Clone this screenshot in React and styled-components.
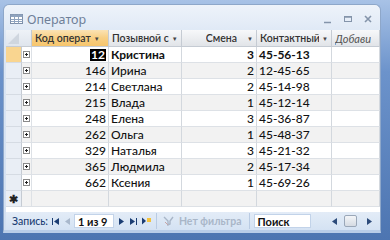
import React from 'react';
import styled, { createGlobalStyle } from 'styled-components';

const GlobalStyle = createGlobalStyle`
  body {
    margin: 0;
    background: #5a82bd;
    font-family: Lato, "Noto Sans", sans-serif;
  }
`;

//***Data***/
const rows = [
  { id: 12, name: 'Кристина', shift: 3, phone: '45-56-13' },
  { id: 146, name: 'Ирина', shift: 2, phone: '12-45-65' },
  { id: 214, name: 'Светлана', shift: 2, phone: '45-14-98' },
  { id: 215, name: 'Влада', shift: 1, phone: '45-12-14' },
  { id: 248, name: 'Елена', shift: 3, phone: '45-36-87' },
  { id: 262, name: 'Ольга', shift: 1, phone: '45-48-37' },
  { id: 329, name: 'Наталья', shift: 3, phone: '45-21-32' },
  { id: 365, name: 'Людмила', shift: 2, phone: '45-17-34' },
  { id: 662, name: 'Ксения', shift: 1, phone: '45-69-26' },
];

const cols = '16px 10px 77px 73px 75px 75px 1fr';

//***Frame***/
const Desktop = styled.div`
  width: 390px;
  height: 240px;
  overflow: hidden;
  box-sizing: border-box;
  padding: 4px 9px 0 3px;
  background: linear-gradient(#a8c2e6 0%, #6c93cb 30%, #4d75b1 100%);
`;

const Window = styled.div`
  height: 229px;
  box-sizing: border-box;
  border: 1px solid #8ea7c9;
  border-bottom: 3px solid #b9cde8;
  border-radius: 6px 6px 0 0;
  background: linear-gradient(#eef3fa, #dbe6f4 15%, #d3e0f1);
  padding-left: 2px;
  display: flex;
  flex-direction: column;
`;

const TitleBar = styled.div`
  height: 25px;
  box-sizing: border-box;
  padding: 3px 4px 0 4px;
  display: flex;
  align-items: center;
`;

const Title = styled.span`
  margin-left: 4px;
  font-family: "Noto Sans", sans-serif;
  font-size: 12.5px;
  color: #6f7f98;
  flex: 1;
`;

const Controls = styled.div`
  display: flex;
  gap: 10px;
  align-items: center;
  margin-right: 3px;
`;

//***Datasheet***/
const Sheet = styled.div`
  background: #fff;
  height: 182px;
  overflow: hidden;
`;

const Row = styled.div`
  display: grid;
  grid-template-columns: ${cols};
  height: ${p => (p.$head ? 17 : 16)}px;
  background: ${p => (p.$alt ? '#f2f2f2' : '#fff')};
`;

const HeadCell = styled.div`
  box-sizing: border-box;
  border-right: 1px solid #c5cbd3;
  border-bottom: 1px solid #c5cbd3;
  background: ${p => (p.$active
    ? 'linear-gradient(#fbe3b4, #f8cf83 50%, #f6c56c)'
    : 'linear-gradient(#f7f8fa, #eceef1 50%, #e1e4e8)')};
  display: flex;
  align-items: center;
  justify-content: ${p => (p.$end ? 'flex-end' : 'flex-start')};
  padding: 0 3px 0 3px;
  font-size: 10.5px;
  font-weight: 600;
  color: #333;
  white-space: nowrap;
  overflow: hidden;
  ${p => p.$italic && 'font-style: italic; font-weight: 400; font-size: 11px; color: #555;'}
`;

const HeadLabel = styled.span`
  overflow: hidden;
  min-width: 0;
`;

const Arrow = styled.span`
  flex-shrink: 0;
  font-size: 6px;
  color: #444;
  margin-left: ${p => p.$gap || 3}px;
`;

const Corner = styled.div`
  box-sizing: border-box;
  border-right: 1px solid #c5cbd3;
  border-bottom: 1px solid #c5cbd3;
  background: linear-gradient(#eef2f7, #dfe5ed);
  grid-column: span 2;
  position: relative;
  &::after {
    content: '';
    position: absolute;
    right: 12px;
    bottom: 2px;
    border-left: 11px solid transparent;
    border-bottom: 11px solid #cfd6df;
  }
`;

const Selector = styled.div`
  box-sizing: border-box;
  border-bottom: 1px solid #d5dbe3;
  border-right: 1px solid #c5cbd3;
  background: ${p => (p.$current ? '#f9d590' : '#e9eef5')};
  display: flex;
  align-items: center;
  justify-content: center;
  font-size: 11px;
  font-weight: 700;
  color: #222;
`;

const Expander = styled.div`
  box-sizing: border-box;
  border-bottom: 1px solid #dde1e6;
  border-right: 1px solid #dde1e6;
  display: flex;
  align-items: center;
  justify-content: center;
`;

const PlusBox = styled.span`
  width: 7px;
  height: 7px;
  box-sizing: border-box;
  border: 1px solid #8a8a8a;
  background: #fff;
  position: relative;
  &::before, &::after {
    content: '';
    position: absolute;
    background: #222;
  }
  &::before { left: 1px; top: 2px; width: 3px; height: 1px; }
  &::after { left: 2px; top: 1px; width: 1px; height: 3px; }
`;

const Cell = styled.div`
  box-sizing: border-box;
  border-bottom: 1px solid #dde1e6;
  border-right: 1px solid #d3d8de;
  display: flex;
  align-items: center;
  justify-content: ${p => (p.$right ? 'flex-end' : 'flex-start')};
  padding: 0 2px;
  font-size: 12px;
  font-weight: ${p => (p.$bold ? 700 : 500)};
  color: #111;
  white-space: nowrap;
  overflow: hidden;
`;

const Selected = styled.span`
  background: #000;
  color: #fff;
  padding: 0 1px;
  line-height: 12px;
`;

//***Navigation***/
const NavBar = styled.div`
  height: 18px;
  display: flex;
  align-items: center;
  background: linear-gradient(#e3ecf7, #d4e2f3);
  font-size: 10.5px;
  font-weight: 500;
  color: #1b3d73;
  padding-left: 6px;
  white-space: nowrap;
  & > * { flex-shrink: 0; }
`;

const NavButton = styled.span`
  width: ${p => p.$w || 12}px;
  display: flex;
  justify-content: center;
  align-items: center;
  margin-left: ${p => p.$ml || 0}px;
`;

const Box = styled.div`
  width: ${p => p.$w}px;
  height: 14px;
  margin-left: ${p => p.$ml || 0}px;
  background: #fff;
  border: 1px solid #c2d3e9;
  box-sizing: border-box;
  display: flex;
  align-items: center;
  padding-left: 3px;
  color: #111;
  font-weight: 700;
  font-size: 11px;
`;

const FilterButton = styled.div`
  display: flex;
  align-items: center;
  gap: 5px;
  height: 16px;
  padding: 0 7px 0 6px;
  margin-left: 2px;
  border-left: 1px solid #b9cbe3;
  border-right: 1px solid #b9cbe3;
  color: #a9b6c8;
  font-weight: 700;
`;

const Scroll = styled.div`
  flex: 1;
  display: flex;
  align-items: center;
  margin-left: 21px;
  margin-right: 8px;
  height: 14px;
`;

const Thumb = styled.div`
  width: 13px;
  height: 12px;
  margin-left: 7px;
  border: 1px solid #9aa7b8;
  border-radius: 2px;
  box-sizing: border-box;
  background: linear-gradient(#f3f5f8, #d5dbe3);
`;

const Spacer = styled.div`
  flex: 1;
`;

const Tri = ({ dir = 'r', color = '#1b3d73' }) => (
  <svg width="5" height="7" viewBox="0 0 5 7">
    {dir === 'r'
      ? <path d="M0 0 L5 3.5 L0 7 Z" fill={color} />
      : <path d="M5 0 L0 3.5 L5 7 Z" fill={color} />}
  </svg>
);

const TableIcon = () => (
  <svg width="13" height="10" viewBox="0 0 13 10">
    <rect x="0.5" y="0.5" width="12" height="9" fill="#fff" stroke="#7c8ea8" />
    <rect x="0.5" y="0.5" width="12" height="2.5" fill="#8fa3be" />
    <path d="M0.5 5.5 H12.5 M0.5 7.5 H12.5 M4.5 0.5 V9.5 M8.5 0.5 V9.5" stroke="#8fa3be" strokeWidth="1" />
  </svg>
);

export default function App() {
  return (
    <Desktop>
      <GlobalStyle />
      <Window>
        <TitleBar>
          <TableIcon />
          <Title>Оператор</Title>
          <Controls>
            <svg width="10" height="10" viewBox="0 0 10 10"><path d="M1 8.5 H8" stroke="#8494aa" strokeWidth="1.5" /></svg>
            <svg width="10" height="10" viewBox="0 0 10 10"><rect x="1.5" y="2.5" width="7" height="5" fill="none" stroke="#8494aa" /><path d="M1.5 3 H8.5" stroke="#8494aa" strokeWidth="1.5" /></svg>
            <svg width="10" height="10" viewBox="0 0 10 10"><path d="M2 2 L8 8 M8 2 L2 8" stroke="#8494aa" strokeWidth="1.6" /></svg>
          </Controls>
        </TitleBar>
        <Sheet>
          <Row $head>
            <Corner />
            <HeadCell $active><HeadLabel>Код операт</HeadLabel><Arrow>▼</Arrow></HeadCell>
            <HeadCell><HeadLabel>Позывной с</HeadLabel><Arrow>▼</Arrow></HeadCell>
            <HeadCell $end><HeadLabel>Смена</HeadLabel><Arrow $gap={10}>▼</Arrow></HeadCell>
            <HeadCell><HeadLabel>Контактный</HeadLabel><Arrow>▼</Arrow></HeadCell>
            <HeadCell $italic><HeadLabel>Добави</HeadLabel></HeadCell>
          </Row>
          {rows.map((r, i) => (
            <Row key={r.id} $alt={i % 2 === 1}>
              <Selector $current={i === 0} />
              <Expander><PlusBox /></Expander>
              <Cell $right $bold={i === 0}>{i === 0 ? <Selected>{r.id}</Selected> : r.id}</Cell>
              <Cell $bold={i === 0}>{r.name}</Cell>
              <Cell $right $bold={i === 0}>{r.shift}</Cell>
              <Cell $bold={i === 0}>{r.phone}</Cell>
              <Cell />
            </Row>
          ))}
          <Row $alt>
            <Selector>✱</Selector>
            <Expander />
            <Cell /><Cell /><Cell /><Cell /><Cell />
          </Row>
        </Sheet>
        <NavBar>
          <span>Запись:</span>
          <NavButton $ml={2}>
            <svg width="7" height="7" viewBox="0 0 7 7"><path d="M0.5 0 V7" stroke="#1b3d73" /><path d="M7 0 L2 3.5 L7 7 Z" fill="#1b3d73" /></svg>
          </NavButton>
          <NavButton><Tri dir="l" color="#a9b8cc" /></NavButton>
          <Box $w={40}>1 из 9</Box>
          <NavButton $ml={2}><Tri /></NavButton>
          <NavButton>
            <svg width="7" height="7" viewBox="0 0 7 7"><path d="M0 0 L5 3.5 L0 7 Z" fill="#1b3d73" /><path d="M6.5 0 V7" stroke="#1b3d73" /></svg>
          </NavButton>
          <NavButton $w={14}>
            <svg width="10" height="8" viewBox="0 0 10 8"><path d="M0 0.5 L4 4 L0 7.5 Z" fill="#1b3d73" /><rect x="5" y="1" width="4" height="4" fill="#f3c23d" /></svg>
          </NavButton>
          <FilterButton>
            <svg width="11" height="10" viewBox="0 0 11 10"><path d="M1 1 L5 5 V9 L7 8 V5 L10 1" fill="none" stroke="#a9b6c8" strokeWidth="1.4" /><path d="M2 6 L5 9" stroke="#c9a3a3" /></svg>
            Нет фильтра
          </FilterButton>
          <Box $w={57} $ml={4}>Поиск</Box>
          <Scroll>
            <Tri dir="l" color="#2d4b7a" />
            <Thumb />
            <Spacer />
            <Tri color="#2d4b7a" />
          </Scroll>
        </NavBar>
      </Window>
    </Desktop>
  );
}
